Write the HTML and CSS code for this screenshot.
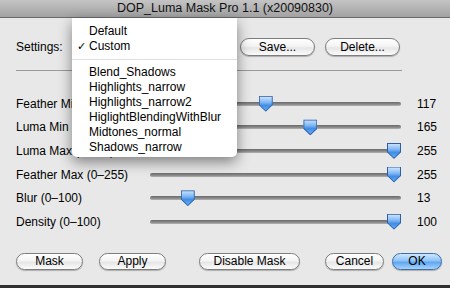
FILE: index.html
```html
<!DOCTYPE html>
<html lang="en">
  <head>
    <meta charset="UTF-8" />
    <meta name="viewport" content="width=device-width, initial-scale=1.0" />
    <title>DOP_Luma Mask Pro 1.1</title>
    <link rel="stylesheet" href="styles.css">
  </head>
  <body>
    <div class="window">
      <div class="titlebar">DOP_Luma Mask Pro 1.1 (x20090830)</div>

      <div class="content">
        <div class="settings-row">
          <span class="settings-label">Settings:</span>
          <span class="popup-button"></span>
          <button class="btn btn-save">Save...</button>
          <button class="btn btn-delete">Delete...</button>
        </div>

        <div class="separator"></div>

        <div class="sliders">
          <div class="slider-row">
            <span class="slider-label">Feather Min (0-255)</span>
            <div class="track"><span class="thumb" style="--v: 0.459"></span></div>
            <span class="slider-value">117</span>
          </div>
          <div class="slider-row">
            <span class="slider-label">Luma Min (0-255)</span>
            <div class="track"><span class="thumb" style="--v: 0.647"></span></div>
            <span class="slider-value">165</span>
          </div>
          <div class="slider-row">
            <span class="slider-label">Luma Max (0-255)</span>
            <div class="track"><span class="thumb" style="--v: 1"></span></div>
            <span class="slider-value">255</span>
          </div>
          <div class="slider-row">
            <span class="slider-label">Feather Max (0–255)</span>
            <div class="track"><span class="thumb" style="--v: 1"></span></div>
            <span class="slider-value">255</span>
          </div>
          <div class="slider-row">
            <span class="slider-label">Blur (0–100)</span>
            <div class="track"><span class="thumb" style="--v: 0.13"></span></div>
            <span class="slider-value">13</span>
          </div>
          <div class="slider-row">
            <span class="slider-label">Density (0–100)</span>
            <div class="track"><span class="thumb" style="--v: 1"></span></div>
            <span class="slider-value">100</span>
          </div>
        </div>

        <div class="button-row">
          <button class="btn btn-mask">Mask</button>
          <button class="btn btn-apply">Apply</button>
          <button class="btn btn-disable">Disable Mask</button>
          <button class="btn btn-cancel">Cancel</button>
          <button class="btn btn-ok">OK</button>
        </div>
      </div>

      <div class="bottom-edge"></div>

      <!-- open popup menu of the Settings popup -->
      <div class="menu">
        <div class="menu-item">Default</div>
        <div class="menu-item checked">Custom</div>
        <div class="menu-sep"></div>
        <div class="menu-item">Blend_Shadows</div>
        <div class="menu-item">Highlights_narrow</div>
        <div class="menu-item">Highlights_narrow2</div>
        <div class="menu-item">HiglightBlendingWithBlur</div>
        <div class="menu-item">Midtones_normal</div>
        <div class="menu-item">Shadows_narrow</div>
      </div>
    </div>
  </body>
</html>
```

FILE: styles.css
```css
* {
  margin: 0;
  padding: 0;
  box-sizing: border-box;
}

body {
  font-family: "Liberation Sans", Arial, sans-serif;
  font-size: 12px;
  color: #000;
  background-color: #e8e8e8;
  width: 450px;
  height: 288px;
  overflow: hidden;
}

.window {
  position: relative;
  width: 450px;
  height: 288px;
  background-color: #e8e8e8;
  display: flex;
  flex-direction: column;
}

.titlebar {
  height: 18px;
  line-height: 17px;
  text-align: center;
  font-size: 12.5px;
  color: #111;
  background: linear-gradient(#c4c4c4, #a2a2a2);
  border-bottom: 1px solid #6a6a6a;
}

.content {
  flex: 1;
  padding: 20px 8px 0 16px;
}

/* settings row */
.settings-row {
  display: flex;
  align-items: center;
  height: 18px;
}

.settings-label {
  width: 56px;
}

.popup-button {
  width: 158px;
  margin-right: 10px;
}

.btn {
  font-family: inherit;
  font-size: 12px;
  color: #000;
  height: 18px;
  border: 1px solid #7d7d7d;
  border-radius: 9px;
  background: linear-gradient(#ffffff, #f4f4f4 45%, #e6e6e6 55%, #fbfbfb);
  box-shadow: 0 1px 1px rgba(0, 0, 0, 0.25);
}

.btn-save,
.btn-delete {
  width: 75px;
}

.btn-delete {
  margin-left: 10px;
}

.separator {
  width: 386px;
  height: 1px;
  margin-top: 14px;
  background-color: #9a9a9a;
}

/* sliders */
.sliders {
  margin-top: 21px;
}

.slider-row {
  display: flex;
  align-items: center;
  height: 23.6px;
}

.slider-label {
  width: 134px;
  white-space: nowrap;
}

.track {
  position: relative;
  width: 251px;
  height: 4px;
  border-radius: 2px;
  background: linear-gradient(#6a6a6a, #8c8c8c 60%, #b4b4b4);
}

.thumb {
  position: absolute;
  top: -6px;
  left: calc(var(--v) * (100% - 14px));
  width: 14px;
  height: 16px;
  background: linear-gradient(#d6e9ff, #7fb6f5 40%, #3f8de6 60%, #76b3f5);
  clip-path: polygon(0 0, 100% 0, 100% 58%, 50% 100%, 0 58%);
  border-radius: 2px 2px 0 0;
}

.thumb::before {
  content: "";
  position: absolute;
  inset: 0;
  background-color: #2f5f9c;
  clip-path: polygon(0 0, 100% 0, 100% 58%, 50% 100%, 0 58%, 1px 57%, 50% 92%, calc(100% - 1px) 57%, calc(100% - 1px) 1px, 1px 1px, 1px 57%, 0 58%);
}

.slider-value {
  margin-left: 16px;
}

/* bottom buttons */
.button-row {
  display: flex;
  margin-top: 19px;
}

.button-row .btn {
  height: 17px;
}

.btn-mask,
.btn-apply {
  width: 67px;
}

.btn-apply {
  margin-left: 16px;
}

.btn-disable {
  width: 101px;
  margin-left: 33px;
}

.btn-cancel {
  width: 59px;
  margin-left: auto;
}

.btn-ok {
  width: 50px;
  margin-left: 8px;
  border-color: #3c6ea8;
  background: linear-gradient(#cfe6fd, #8ec3f8 45%, #5ea7f1 55%, #a9d3fb);
}

.bottom-edge {
  height: 3px;
  background-color: #303030;
}

/* popup menu */
.menu {
  position: absolute;
  top: 18px;
  left: 72px;
  width: 165px;
  height: 139px;
  padding-top: 6px;
  background-color: #fff;
  border-radius: 0 0 5px 5px;
  box-shadow: 0 5px 14px rgba(0, 0, 0, 0.45);
}

.menu-item {
  position: relative;
  height: 15px;
  line-height: 15px;
  padding-left: 17px;
}

.menu-item.checked::before {
  content: "\2713";
  position: absolute;
  left: 5px;
  font-family: "DejaVu Sans", sans-serif;
  font-size: 11px;
}

.menu-sep {
  height: 1px;
  margin: 5px 0 5px;
  background-color: #e0e0e0;
}
```
